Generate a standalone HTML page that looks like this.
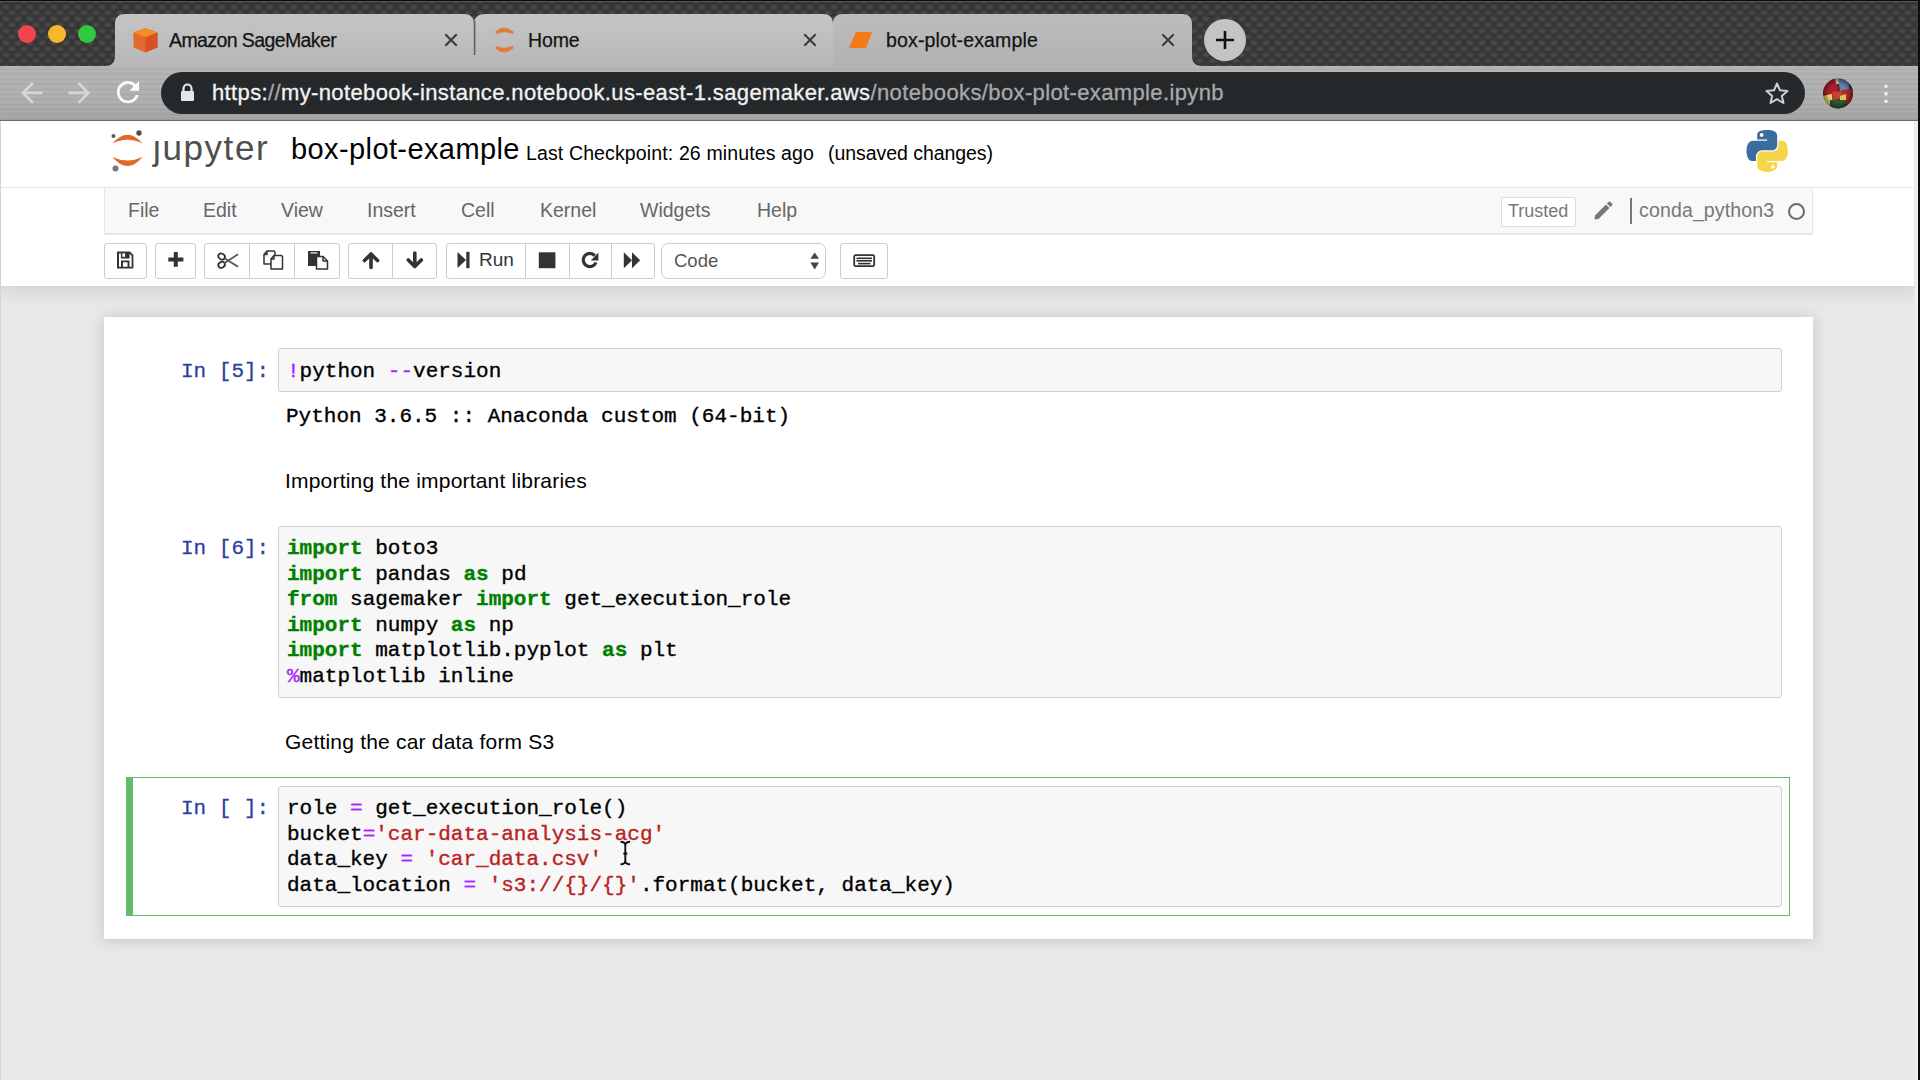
<!DOCTYPE html>
<html><head><meta charset="utf-8">
<style>
*{box-sizing:border-box;margin:0;padding:0}
html,body{width:1920px;height:1080px;overflow:hidden;background:#e8e8e8;font-family:"Liberation Sans",sans-serif}
.abs{position:absolute}
#tabstrip{position:absolute;left:0;top:0;width:1920px;height:66px;background-color:#363636;
 background-image:radial-gradient(ellipse 5px 3.5px at 6px 4px, #4e4e4e 0, #444 45%, transparent 100%),radial-gradient(ellipse 5px 3.5px at 0px 10px, #4e4e4e 0, #444 45%, transparent 100%),radial-gradient(ellipse 5px 3.5px at 12px 10px, #4e4e4e 0, #444 45%, transparent 100%);background-size:12px 12px;background-position:0 3px;}
#topline{position:absolute;left:0;top:0;width:1920px;height:2px;background:#0b0b0b;border-bottom:1px solid #555}
.light{position:absolute;top:25px;width:18px;height:18px;border-radius:50%}
.tab{position:absolute;top:14px;height:52px;background:#c2c2c2;border-radius:9px 9px 0 0}
.tabtxt{position:absolute;top:28.5px;font-size:19.5px;letter-spacing:-0.15px;-webkit-text-stroke:0.25px #141414;color:#141414;white-space:nowrap}
.tabx{position:absolute;top:32px;width:14px;height:14px}
#toolbar{position:absolute;left:0;top:66px;width:1920px;height:55px;background:repeating-linear-gradient(to bottom,rgba(255,255,255,0.06) 0 1px,rgba(0,0,0,0) 1px 3px,rgba(0,0,0,0.04) 3px 4px,rgba(0,0,0,0) 4px 5px),linear-gradient(to bottom,#b3b3b3,#aaaaaa);border-bottom:1px solid #6f6f6f}
#urlbar{position:absolute;left:161px;top:72px;width:1644px;height:42px;border-radius:21px;background:#25292b}
#urltext{position:absolute;left:212px;top:80px;font-size:22px;letter-spacing:0.37px;-webkit-text-stroke:0.3px currentColor;color:#f2f2f2;white-space:nowrap}
#urltext span{color:#a9a9a9}
#page{position:absolute;left:0;top:121px;width:1920px;height:959px;background:#e8e8e8}
#header{position:absolute;left:0;top:121px;width:1920px;height:165px;background:#fff;box-shadow:0 0 18px 1.5px rgba(87,87,87,0.2)}
#menubar{position:absolute;left:104px;top:187px;width:1709px;height:48px;background:#f8f8f8;border:1px solid #e5e5e5;border-bottom:2px solid #e6e6e6}
.menu{position:absolute;top:199px;font-size:19.5px;color:#666}
.btn{position:absolute;top:243px;height:36px;border:1px solid #ccc;background:#fff;border-radius:3px}
#nbc{position:absolute;left:104px;top:317px;width:1709px;height:622px;background:#fff;box-shadow:0 1px 12px 1px rgba(87,87,87,0.22)}
.prompt{position:absolute;font-family:"Liberation Mono",monospace;font-size:21px;color:#303F9F;white-space:pre;line-height:25.5px;-webkit-text-stroke:0.3px currentColor}
.inarea{position:absolute;left:278px;width:1504px;background:#f7f7f7;border:1px solid #cfcfcf;border-radius:3px}
.code{position:absolute;left:287px;font-family:"Liberation Mono",monospace;font-size:21px;color:#000;white-space:pre;line-height:25.5px;-webkit-text-stroke:0.35px currentColor}
.k{color:#008000;font-weight:bold}
.o{color:#AA22FF}
.s{color:#BA2121}
.md{position:absolute;left:285px;font-size:21px;letter-spacing:0.2px;color:#000;white-space:nowrap}
</style></head><body>
<div id="tabstrip"></div>
<div id="topline"></div>
<div class="light" style="left:18px;background:#f2454e"></div>
<div class="light" style="left:48px;background:#f6b92e"></div>
<div class="light" style="left:78px;background:#2fc840"></div>
<svg class="abs" style="left:0;top:0" width="1920" height="66" viewBox="0 0 1920 66">
 <defs>
  <linearGradient id="tg" x1="0" y1="0" x2="0" y2="1">
   <stop offset="0" stop-color="#c5c5c5"/><stop offset="1" stop-color="#b7b7b7"/>
  </linearGradient>
  <linearGradient id="tga" x1="0" y1="0" x2="0" y2="1">
   <stop offset="0" stop-color="#bdbdbd"/><stop offset="1" stop-color="#b2b2b2"/>
  </linearGradient>
 </defs>
 <path d="M105,66 C112,66 115,62 115,56 L115,24 C115,17 119,14 125,14 L464,14 C470,14 474,17 474,24 L475.5,24 L475.5,66 L474,66 Z" fill="url(#tg)"/>
 <path d="M474,24 C474,17 479,14 485,14 L823,14 C829,14 833,17 833,24 L834.5,24 L834.5,66 L475,66 Z" fill="url(#tg)"/>
 <path d="M833,24 C833,17 837,14 843,14 L1182,14 C1188,14 1192,17 1192,24 L1192,56 C1192,62 1195,66 1202,66 L833,66 Z" fill="url(#tga)"/>
 <rect x="473.8" y="21" width="1.6" height="34" fill="#5f5f5f"/>
 <!-- favicons -->
 <path d="M145.5,28 L157.5,32.5 L157.5,47.5 L145.5,52.5 L133.5,47.5 L133.5,32.5 Z" fill="#e3692a"/>
 <path d="M145.5,28 L157.5,32.5 L145.5,37.5 L133.5,32.5 Z" fill="#f18d25"/>
 <path d="M145.5,37.5 L157.5,32.5 L157.5,47.5 L145.5,52.5 Z" fill="#d7502a"/>
 <path d="M496,33 Q504,25 513,33 Q504,29 496,33 Z" fill="#e07a3e" stroke="#e07a3e" stroke-width="2.5"/>
 <path d="M496,47 Q504,55 513,47 Q504,51 496,47 Z" fill="#e07a3e" stroke="#e07a3e" stroke-width="2.5"/>
 <path d="M856,32 L872,32 L866,48 L849,48 Z" fill="#f57a18"/>
 <!-- close x -->
 <g stroke="#3a3a3a" stroke-width="2" stroke-linecap="square">
  <path d="M446,35 L456,45 M456,35 L446,45"/>
  <path d="M805,35 L815,45 M815,35 L805,45"/>
  <path d="M1163,35 L1173,45 M1173,35 L1163,45"/>
 </g>
 <circle cx="1225" cy="40" r="21" fill="#c4c4c4"/>
 <path d="M1225,31 L1225,49 M1216,40 L1234,40" stroke="#111" stroke-width="2.6"/>
</svg>
<div class="tabtxt" style="left:169px;letter-spacing:-0.6px">Amazon SageMaker</div>
<div class="tabtxt" style="left:528px">Home</div>
<div class="tabtxt" style="left:886px;letter-spacing:0.15px">box-plot-example</div>

<div id="toolbar"></div>
<div id="urlbar"></div>
<svg class="abs" style="left:0;top:66px" width="1920" height="55" viewBox="0 66 1920 55">
 <path transform="translate(15.6,76.6) scale(1.36)" fill="#d6d6d6" d="M20 11H7.83l5.59-5.59L12 4l-8 8 8 8 1.41-1.41L7.83 13H20v-2z"/>
 <path transform="translate(63,76.6) scale(1.36)" fill="#d6d6d6" d="M12 4l-1.41 1.41L16.17 11H4v2h12.17l-5.58 5.59L12 20l8-8z"/>
 <path transform="translate(111.4,75.6) scale(1.38)" fill="#fbfbfb" d="M17.65 6.35C16.2 4.9 14.21 4 12 4c-4.42 0-7.99 3.58-7.99 8s3.57 8 7.99 8c3.73 0 6.84-2.55 7.730-6h-2.08c-.82 2.33-3.04 4-5.65 4-3.310 0-6-2.69-6-6s2.69-6 6-6c1.66 0 3.14.69 4.22 1.78L13 11h7V4l-2.35 2.35z"/>
 <!-- lock -->
 <path d="M183.5,91.5 L183.5,88.5 A4,4 0 0 1 191.5,88.5 L191.5,91.5" fill="none" stroke="#e6e6e6" stroke-width="2.2"/>
 <rect x="181" y="91" width="13" height="10" rx="1" fill="#e6e6e6"/>
 <!-- star -->
 <path d="M1777,83.5 L1780,90.3 L1787.5,91 L1781.8,96 L1783.5,103 L1777,99.2 L1770.5,103 L1772.2,96 L1766.5,91 L1774,90.3 Z" fill="none" stroke="#cfcfcf" stroke-width="2" stroke-linejoin="round"/>
 <!-- avatar -->
 <g filter="url(#avblur)">
  <filter id="avblur"><feGaussianBlur stdDeviation="0.5"/></filter>
  <clipPath id="av"><circle cx="1838" cy="93.5" r="15"/></clipPath>
  <radialGradient id="avg" cx="0.5" cy="0.5" r="0.5"><stop offset="0.6" stop-color="#000" stop-opacity="0"/><stop offset="1" stop-color="#000" stop-opacity="0.45"/></radialGradient>
  <g clip-path="url(#av)">
   <rect x="1820" y="76" width="36" height="36" fill="#4a2a2a"/>
   <path d="M1822,80 L1836,78 L1838,90 L1834,96 L1822,94 Z" fill="#b21d2b"/>
   <path d="M1835,78 L1840,78 L1839,84 L1836,84 Z" fill="#d8c8a0"/>
   <path d="M1838,78 L1850,78 L1850,90 L1840,91 Z" fill="#6682aa"/>
   <path d="M1848,80 L1856,80 L1856,90 L1850,90 Z" fill="#222a38"/>
   <path d="M1842,90 L1856,88 L1856,102 L1846,104 Z" fill="#b02a2a"/>
   <path d="M1822,96 L1832,94 L1833,106 L1824,108 Z" fill="#e6d46c"/>
   <path d="M1832,92 L1842,91 L1844,98 L1834,100 Z" fill="#c8402c"/>
   <path d="M1840,96 L1846,94 L1846,104 L1840,104 Z" fill="#e2c25c"/>
   <path d="M1830,100 L1846,100 L1846,110 L1830,110 Z" fill="#2e5a30"/>
   <circle cx="1838" cy="93.5" r="15" fill="url(#avg)"/>
  </g>
 </g>
 <g fill="#f4f4f4">
  <rect x="1884.5" y="84.8" width="3" height="3"/>
  <rect x="1884.5" y="92.3" width="3" height="3"/>
  <rect x="1884.5" y="99.8" width="3" height="3"/>
 </g>
</svg>
<div id="urltext">https:<span>//</span>my-notebook-instance.notebook.us-east-1.sagemaker.aws<span>/notebooks/box-plot-example.ipynb</span></div>



<div id="page"></div>
<div id="header"></div>
<div class="abs" style="left:0;top:187px;width:1920px;height:1px;background:#eaeaea"></div>
<svg class="abs" style="left:100px;top:125px" width="50" height="50" viewBox="100 125 50 50">
 <path d="M112.4,143.5 Q127.5,126 142.5,143.5 Q127.5,136 112.4,143.5 Z" fill="#e2682c"/>
 <path d="M112.4,157 Q127.5,175 142.5,157 Q127.5,164 112.4,157 Z" fill="#e2682c"/>
 <circle cx="139" cy="133" r="2.7" fill="#4d4d4d"/>
 <circle cx="113.5" cy="136" r="2" fill="#5a5a5a"/>
 <circle cx="115.5" cy="168.5" r="3" fill="#727874"/>
</svg>
<div class="abs" style="left:153px;top:128px;font-size:35px;letter-spacing:1.6px;color:#4e4e4e">&#x237;upyter</div>
<div class="abs" style="left:291px;top:133px;font-size:29px;letter-spacing:0.4px;color:#000">box-plot-example</div>
<div class="abs" style="left:526px;top:142px;font-size:19.5px;letter-spacing:0.13px;color:#000">Last Checkpoint: 26 minutes ago</div>
<div class="abs" style="left:828px;top:142px;font-size:19.5px;letter-spacing:-0.05px;color:#000">(unsaved changes)</div>
<svg class="abs" style="left:1740px;top:125px" width="56" height="56" viewBox="1740 125 56 56">
 <g transform="translate(1746.6,129.7) scale(0.372)">
  <path fill="#3b6d9c" d="M54.9,0.9 C50.3,0.9 45.9,1.3 42,2 C30.6,4 28.5,8.2 28.5,16 L28.5,26.3 L55.4,26.3 L55.4,29.7 L28.5,29.7 L18.4,29.7 C10.6,29.7 3.8,34.4 1.6,43.4 C-0.9,53.6 -1,60 1.6,70.6 C3.5,78.6 8.1,84.2 15.9,84.2 L25.2,84.2 L25.2,71.9 C25.2,63 32.9,55.1 42,55.1 L68.8,55.1 C76.3,55.1 82.2,48.9 82.2,41.5 L82.2,16 C82.2,8.7 76.1,3.3 68.8,2 C64.2,1.2 59.4,0.9 54.9,0.9 Z M40.4,9.1 C43.2,9.1 45.4,11.4 45.4,14.2 C45.4,17 43.2,19.3 40.4,19.3 C37.6,19.3 35.4,17 35.4,14.2 C35.4,11.4 37.6,9.1 40.4,9.1 Z"/>
  <path fill="#f5d549" d="M85.6,29.7 L85.6,41.6 C85.6,50.9 77.8,58.7 68.8,58.7 L42,58.7 C34.7,58.7 28.5,65 28.5,72.4 L28.5,97.9 C28.5,105.2 34.8,109.4 42,111.5 C50.6,114 58.8,114.5 68.8,111.5 C75.6,109.5 82.2,105.6 82.2,97.9 L82.2,87.7 L55.4,87.7 L55.4,84.2 L82.2,84.2 L95.6,84.2 C103.4,84.2 106.3,78.8 109,70.6 C111.8,62.2 111.7,54.1 109,43.4 C107.1,35.6 103.4,29.7 95.6,29.7 Z M70.6,94.7 C73.4,94.7 75.6,97 75.6,99.8 C75.6,102.6 73.4,104.9 70.6,104.9 C67.8,104.9 65.6,102.6 65.6,99.8 C65.6,97 67.8,94.7 70.6,94.7 Z"/>
 </g>
</svg>

<div id="menubar"></div>
<div class="menu" style="left:128px">File</div>
<div class="menu" style="left:203px">Edit</div>
<div class="menu" style="left:281px">View</div>
<div class="menu" style="left:367px">Insert</div>
<div class="menu" style="left:461px">Cell</div>
<div class="menu" style="left:540px">Kernel</div>
<div class="menu" style="left:640px">Widgets</div>
<div class="menu" style="left:757px">Help</div>
<div class="abs" style="left:1501px;top:196.5px;width:75px;height:30.5px;background:#fff;border:1px solid #ddd;border-radius:2px"></div>
<div class="menu" style="left:1508px;top:201px;font-size:18px;color:#777">Trusted</div>
<svg class="abs" style="left:1590px;top:198px" width="24" height="24" viewBox="1590 198 24 24">
 <path d="M1595,215.5 L1606,204.5 L1609.5,208 L1598.5,219 L1594.5,219.5 Z" fill="#777"/>
 <path d="M1607,203.5 L1608.5,202 Q1609.5,201 1610.5,202 L1612,203.5 Q1613,204.5 1612,205.5 L1610.5,207 Z" fill="#777"/>
</svg>
<div class="abs" style="left:1630px;top:198px;width:2px;height:26px;background:#777"></div>
<div class="menu" style="left:1639px;letter-spacing:0.15px;color:#777">conda_python3</div>
<div class="abs" style="left:1787.5px;top:202.5px;width:17px;height:17px;border:2.6px solid #6a6a6a;border-radius:50%"></div>

<div class="btn" style="left:104px;width:43px"></div>
<div class="btn" style="left:155px;width:41px"></div>
<div class="btn" style="left:204px;width:136px"></div>
<div class="abs" style="left:249px;top:243px;width:1px;height:36px;background:#ccc"></div>
<div class="abs" style="left:294px;top:243px;width:1px;height:36px;background:#ccc"></div>
<div class="btn" style="left:348px;width:89px"></div>
<div class="abs" style="left:392px;top:243px;width:1px;height:36px;background:#ccc"></div>
<div class="btn" style="left:446px;width:209px"></div>
<div class="abs" style="left:525px;top:243px;width:1px;height:36px;background:#ccc"></div>
<div class="abs" style="left:569px;top:243px;width:1px;height:36px;background:#ccc"></div>
<div class="abs" style="left:611px;top:243px;width:1px;height:36px;background:#ccc"></div>
<div class="btn" style="left:661px;width:165px;border-radius:7px"></div>
<div class="btn" style="left:840px;width:48px"></div>
<div class="abs" style="left:479px;top:249px;font-size:19px;color:#333">Run</div>
<div class="abs" style="left:674px;top:250px;font-size:18.5px;color:#555">Code</div>
<svg class="abs" style="left:100px;top:240px" width="800" height="42" viewBox="100 240 800 42">
 <!-- save -->
 <path fill="#333" fill-rule="evenodd" d="M117,251.6 L130,251.6 L133.4,255 L133.4,268.5 L117,268.5 Z M119,253.4 L119,266.7 L121,266.7 L121,260.5 L129.5,260.5 L129.5,266.7 L131.6,266.7 L131.6,255.8 L129.6,253.8 L129.6,258.6 L120.9,258.6 L120.9,253.4 Z M123,262.3 L123,266.7 L127.5,266.7 L127.5,262.3 Z"/>
 <rect x="122.3" y="253.4" width="2.8" height="3.4" fill="#fff"/>
 <!-- plus -->
 <path fill="#333" d="M173.8,252 L177.8,252 L177.8,257.4 L183.4,257.4 L183.4,261.4 L177.8,261.4 L177.8,266.7 L173.8,266.7 L173.8,261.4 L168.3,261.4 L168.3,257.4 L173.8,257.4 Z"/>
 <!-- scissors -->
 <g fill="none" stroke="#333" stroke-width="1.8">
  <ellipse cx="221.6" cy="256.5" rx="3.4" ry="2.8" transform="rotate(30 221.6 256.5)"/>
  <ellipse cx="221.6" cy="264.8" rx="3.4" ry="2.8" transform="rotate(-30 221.6 264.8)"/>
 </g>
 <g stroke="#555" stroke-width="1.7">
  <path d="M224.5,258.3 L238,266.8 M224.5,263 L238,254.3"/>
 </g>
 <!-- copy -->
 <g fill="#fff" stroke="#333" stroke-width="1.5" stroke-linejoin="round">
  <path d="M267,251 L274,251 L275,252 L275,264 L264,264 L264,254.5 Z"/>
  <path d="M274,255.5 L281.5,255.5 L282.5,256.5 L282.5,269 L271,269 L271,259 Z"/>
  <path d="M264,254.5 L267,254.5 L267,251" fill="none"/>
  <path d="M271,259 L274,259 L274,255.5" fill="none"/>
 </g>
 <!-- paste -->
 <path fill="#333" d="M308,251 L320,251 L320,256 L316,256 L316,266 L308,266 Z"/>
 <rect x="310.5" y="252.2" width="7" height="1.4" fill="#ddd"/>
 <g fill="#fff" stroke="#333" stroke-width="1.5" stroke-linejoin="round">
  <path d="M316.5,256.5 L323,256.5 L327.5,261 L327.5,269 L316.5,269 Z"/>
  <path d="M323,256.5 L323,261 L327.5,261" fill="none"/>
 </g>
 <!-- up -->
 <path fill="none" stroke="#333" stroke-width="3.6" stroke-linecap="round" stroke-linejoin="round" d="M371,267.5 L371,255 M364.5,260.5 L371,254 L377.5,260.5"/>
 <!-- down -->
 <path fill="none" stroke="#333" stroke-width="3.6" stroke-linecap="round" stroke-linejoin="round" d="M414.8,253 L414.8,265.5 M408.3,260 L414.8,266.5 L421.3,260"/>
 <!-- step -->
 <path fill="#333" d="M457.5,252 L466,260 L457.5,268 Z"/>
 <rect x="466.3" y="251.8" width="3.2" height="16.4" fill="#333"/>
 <!-- stop -->
 <rect x="538.8" y="252.3" width="16.6" height="15.9" fill="#333"/>
 <!-- restart -->
 <path fill="none" stroke="#333" stroke-width="3.2" d="M596,262.5 A6.6,6.6 0 1 1 594.8,255.6"/>
 <path fill="#333" d="M598.4,252.6 L598.4,260.4 L590.8,260.4 Z"/>
 <!-- forward -->
 <path fill="#333" d="M623.8,252.3 L632,260.2 L632,252.3 L640.2,260.2 L632,268.2 L632,260.2 L623.8,268.2 Z"/>
 <!-- select arrows -->
 <path fill="#444" d="M810.4,258.8 L814.7,252.5 L819,258.8 Z M810.4,262.5 L819,262.5 L814.7,269.4 Z"/>
 <!-- keyboard -->
 <rect x="854.2" y="255.2" width="20" height="11" rx="1.5" fill="none" stroke="#333" stroke-width="1.8"/>
 <g fill="#333">
  <rect x="856.5" y="257.5" width="15.5" height="1.6"/>
  <rect x="856.5" y="260" width="15.5" height="1.6"/>
  <rect x="858" y="262.8" width="12.5" height="1.6"/>
 </g>
</svg>
<div id="nbc"></div>
<div class="prompt" style="left:181px;top:359px">In [5]:</div>
<div class="inarea" style="top:348px;height:44px"></div>
<div class="code" style="top:359px"><span class="o">!</span>python <span class="o">--</span>version</div>
<div class="code" style="top:404px;left:286px">Python 3.6.5 :: Anaconda custom (64-bit)</div>
<div class="md" style="top:469px">Importing the important libraries</div>

<div class="prompt" style="left:181px;top:536px">In [6]:</div>
<div class="inarea" style="top:526px;height:172px"></div>
<div class="code" style="top:536px"><span class="k">import</span> boto3
<span class="k">import</span> pandas <span class="k">as</span> pd
<span class="k">from</span> sagemaker <span class="k">import</span> get_execution_role
<span class="k">import</span> numpy <span class="k">as</span> np
<span class="k">import</span> matplotlib.pyplot <span class="k">as</span> plt
<span class="o">%</span>matplotlib inline</div>
<div class="md" style="top:730px">Getting the car data form S3</div>

<div class="abs" style="left:126px;top:777px;width:1664px;height:139px;border:1px solid #66BB6A"></div>
<div class="abs" style="left:126px;top:777px;width:7px;height:139px;background:#66BB6A"></div>
<div class="prompt" style="left:181px;top:796px">In [ ]:</div>
<div class="inarea" style="top:786px;height:121px"></div>
<div class="code" style="top:796px">role <span class="o">=</span> get_execution_role()
bucket<span class="o">=</span><span class="s">'car-data-analysis-acg'</span>
data_key <span class="o">=</span> <span class="s">'car_data.csv'</span>
data_location <span class="o">=</span> <span class="s">'s3://{}/{}'</span>.format(bucket, data_key)</div>
<svg class="abs" style="left:615px;top:838px" width="20" height="30" viewBox="615 838 20 30">
 <path d="M620.5,841.8 Q625.3,841.8 625.3,845.5 L625.3,860.5 Q625.3,864.3 620.5,864.3 M630.1,841.8 Q625.3,841.8 625.3,845.5 M630.1,864.3 Q625.3,864.3 625.3,860.5" fill="none" stroke="#111" stroke-width="1.9"/>
 <rect x="623.3" y="852.6" width="4" height="2" fill="#111"/>
</svg>
<div class="abs" style="left:1914px;top:121px;width:4px;height:959px;background:linear-gradient(to right,#e8e8e8,#f2f2f2)"></div>
<div class="abs" style="left:1918px;top:0;width:2px;height:1080px;background:#0d0d0d"></div>
<div class="abs" style="left:0;top:121px;width:1px;height:959px;background:#d4d4d4"></div>
</body></html>
